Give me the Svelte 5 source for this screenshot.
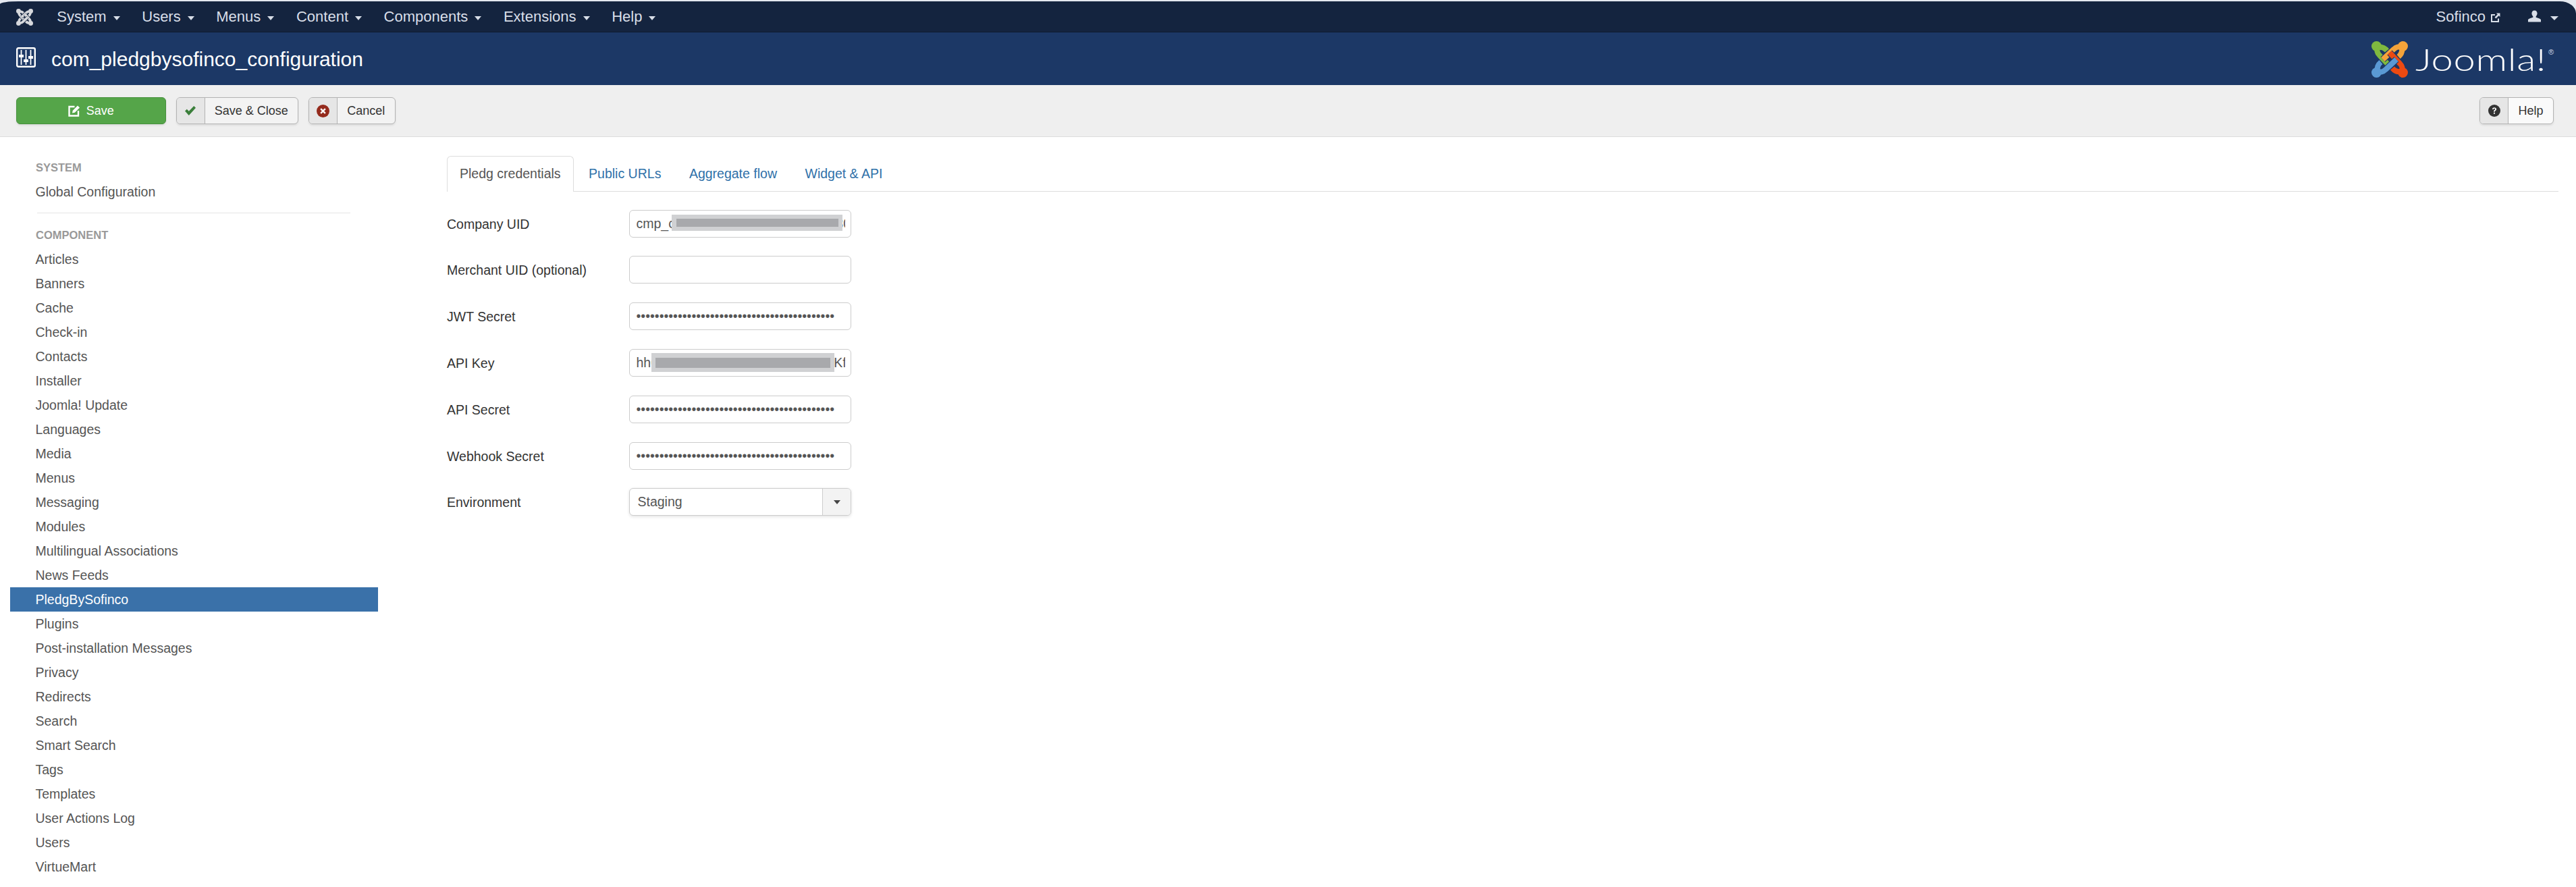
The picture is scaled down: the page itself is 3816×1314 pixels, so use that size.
<script>
	const topMenu = ['System', 'Users', 'Menus', 'Content', 'Components', 'Extensions', 'Help'];
	const components = [
		'Articles', 'Banners', 'Cache', 'Check-in', 'Contacts', 'Installer', 'Joomla! Update',
		'Languages', 'Media', 'Menus', 'Messaging', 'Modules', 'Multilingual Associations',
		'News Feeds', 'PledgBySofinco', 'Plugins', 'Post-installation Messages', 'Privacy',
		'Redirects', 'Search', 'Smart Search', 'Tags', 'Templates', 'User Actions Log', 'Users',
		'VirtueMart'
	];
	const tabs = ['Pledg credentials', 'Public URLs', 'Aggregate flow', 'Widget & API'];
	const secret = 'x'.repeat(43);
	const markColors = ['#7fb93f', '#f4a33a', '#ec4a12', '#5a99d4'];
	const greyColors = ['#d6d8dc', '#d6d8dc', '#d6d8dc', '#d6d8dc'];
</script>

{#snippet mark(colors, gap)}
	<svg class="piece-set" viewBox="0 0 54 54" aria-hidden="true">
		{#each [0, 1, 2, 3] as i}
			<g transform="rotate({i * 90} 27 27)">
				<path d="M23 14 C19 9 14 8 9 9 C8 14 8 17 12 21 L27 37" fill="none" stroke={gap} stroke-width="10" />
				<path d="M23 14 C19 9 14 8 9 9 C8 14 8 17 12 21 L27 37" fill="none" stroke={colors[i]} stroke-width="8" />
				<circle cx="7.500" cy="7.500" r="7.500" fill={colors[i]} />
			</g>
		{/each}
	</svg>
{/snippet}

<div class="page">
	<nav class="topbar">
		<span class="brand">{@render mark(greyColors, '#14243f')}</span>
		<ul class="menu">
			{#each topMenu as item}
				<li>{item}<i class="caret"></i></li>
			{/each}
		</ul>
		<div class="user">
			<span class="site">Sofinco
				<svg class="ext" viewBox="0 0 16 16" aria-hidden="true">
					<path d="M12 9.500V14H2V4h5" fill="none" stroke="currentColor" stroke-width="2" />
					<path d="M9 1.500h5.500V7L12.600 5.200 8.400 9.400 6.600 7.600l4.200-4.200z" fill="currentColor" />
				</svg>
			</span>
			<svg class="person" viewBox="0 0 20 18" aria-hidden="true">
				<path d="M10 0c2.800 0 4.300 2 4.300 4.600 0 2-.9 3.600-2 4.600v1.600c2 .8 6.700 1.600 7.700 3.600V18H0v-3.600c1-2 5.700-2.800 7.700-3.600V9.200c-1.100-1-2-2.600-2-4.600C5.700 2 7.200 0 10 0z" fill="currentColor" />
			</svg>
			<i class="caret wide"></i>
		</div>
	</nav>

	<header class="title-bar">
		<svg class="title-icon" viewBox="0 0 29 30" aria-hidden="true">
			<rect x="1.200" y="1.200" width="26.600" height="27.600" rx="2" fill="none" stroke="#fff" stroke-width="2.400" />
			<path d="M7.500 4v22M14.500 4v22M21.500 4v22" stroke="#fff" stroke-width="1.800" />
			<rect x="4" y="11" width="7" height="4" fill="#fff" />
			<rect x="11" y="18" width="7" height="4" fill="#fff" />
			<rect x="18" y="13" width="7" height="4" fill="#fff" />
		</svg>
		<h1>com_pledgbysofinco_configuration</h1>
		<div class="logo">
			<span class="logo-mark">{@render mark(markColors, '#1c3866')}</span>
			<span class="wordmark">Joomla!</span><span class="reg">®</span>
		</div>
	</header>

	<div class="toolbar">
		<button class="btn save">
			<svg class="ico-save" viewBox="0 0 18 18" aria-hidden="true">
				<path d="M9.500 3H1.500v13.500H15V9" fill="none" stroke="#fff" stroke-width="2.400" />
				<path d="M6 12.500l.8-3.800L14 1.500l3 3-7.200 7.200z" fill="#fff" />
			</svg>
			Save
		</button>
		<button class="btn split close">
			<span class="icon-cell">
				<svg viewBox="0 0 18 16" width="18" height="16" aria-hidden="true">
					<path d="M1 8.500l2.800-2.800 3 3L14.200 1 17 3.800 6.800 15z" fill="#3b7f3b" />
				</svg>
			</span>
			<span class="label">Save &amp; Close</span>
		</button>
		<button class="btn split cancel">
			<span class="icon-cell">
				<svg viewBox="0 0 18 18" width="19" height="19" aria-hidden="true">
					<circle cx="9" cy="9" r="9" fill="#942a1c" />
					<path d="M5.800 5.800l6.400 6.400M12.200 5.800l-6.400 6.400" stroke="#fff" stroke-width="2.200" />
				</svg>
			</span>
			<span class="label">Cancel</span>
		</button>
		<button class="btn split help">
			<span class="icon-cell">
				<svg viewBox="0 0 18 18" width="18" height="18" aria-hidden="true">
					<circle cx="9" cy="9" r="9" fill="#333" />
					<path d="M6 7c0-1.800 1.300-2.800 3-2.800S12.100 5.200 12.100 6.800c0 2-2.300 2-2.300 3.800H8c0-2.600 2.200-2.700 2.200-3.800 0-.6-.5-1-1.200-1s-1.200.4-1.200 1.200z" fill="#fff" />
					<rect x="8" y="11.700" width="1.900" height="2" fill="#fff" />
				</svg>
			</span>
			<span class="label">Help</span>
		</button>
	</div>

	<main class="body">
		<aside class="sidebar">
			<div class="section">System</div>
			<div class="row">Global Configuration</div>
			<hr />
			<div class="section">Component</div>
			{#each components as name}
				<div class="row" class:active={name === 'PledgBySofinco'}>{name}</div>
			{/each}
		</aside>

		<section class="content">
			<ul class="tabs">
				{#each tabs as tab, i}
					<li class:current={i === 0}>{tab}</li>
				{/each}
			</ul>

			<form class="form">
				<div class="field">
					<label for="company">Company UID</label>
					<div class="masked">
						<input id="company" type="text" readonly value="cmp_c0000000000000000000000300000" />
						<span class="blur company"><span></span></span>
					</div>
				</div>
				<div class="field">
					<label for="merchant">Merchant UID (optional)</label>
					<input id="merchant" type="text" readonly value="" />
				</div>
				<div class="field">
					<label for="jwt">JWT Secret</label>
					<input id="jwt" type="password" readonly value={secret} />
				</div>
				<div class="field">
					<label for="apikey">API Key</label>
					<div class="masked">
						<input id="apikey" type="text" readonly value="hh0000000000000000000000000Kfxxxx" />
						<span class="blur key"><span></span></span>
					</div>
				</div>
				<div class="field">
					<label for="apisecret">API Secret</label>
					<input id="apisecret" type="password" readonly value={secret} />
				</div>
				<div class="field">
					<label for="webhook">Webhook Secret</label>
					<input id="webhook" type="password" readonly value={secret} />
				</div>
				<div class="field">
					<label for="env">Environment</label>
					<div id="env" class="chosen">
						<span class="chosen-value">Staging</span>
						<span class="chosen-arrow"><i></i></span>
					</div>
				</div>
			</form>
		</section>
	</main>
</div>

<style>
	:global(body) {
		margin: 0;
		background: #fff;
	}
	.page {
		width: 3816px;
		height: 1314px;
		overflow: hidden;
		font-family: 'Liberation Sans', Arial, sans-serif;
		font-size: 19.5px;
		color: #333;
		background: #fff;
	}

	/* top nav */
	.topbar {
		display: flex;
		align-items: center;
		height: 48px;
		box-sizing: border-box;
		border-top: 2px solid #e4e8ef;
		background: #e4e8ef;
		color: #d8dee8;
		font-size: 22px;
		position: relative;
	}
	.topbar::before {
		content: '';
		position: absolute;
		inset: 0;
		background: #14243f;
		border-bottom: 1px solid #0e1a30;
		border-radius: 28px 24px 0 0 / 4px 18px 0 0;
	}
	.brand,
	.menu,
	.user {
		position: relative;
	}
	.brand {
		width: 27px;
		height: 25px;
		margin-left: 23px;
		display: flex;
	}
	.piece-set {
		width: 100%;
		height: 100%;
		display: block;
	}
	.menu {
		display: flex;
		list-style: none;
		margin: 0 0 0 18px;
		padding: 0;
	}
	.menu li {
		display: flex;
		align-items: center;
		padding: 0 16.3px;
	}
	.caret {
		display: inline-block;
		width: 0;
		height: 0;
		margin-left: 10px;
		margin-top: 3px;
		border-left: 5.5px solid transparent;
		border-right: 5.5px solid transparent;
		border-top: 6px solid currentColor;
	}
	.user {
		display: flex;
		align-items: center;
		margin-left: auto;
		padding-right: 26px;
	}
	.site {
		display: flex;
		align-items: center;
		gap: 7px;
	}
	.ext {
		width: 16px;
		height: 16px;
		margin-top: 2px;
	}
	.person {
		width: 19px;
		height: 18px;
		margin-left: 40px;
		margin-top: -2px;
	}
	.caret.wide {
		margin-left: 14px;
		border-left-width: 6px;
		border-right-width: 6px;
	}

	/* title bar */
	.title-bar {
		display: flex;
		align-items: center;
		height: 78px;
		background: #1c3866;
		padding-left: 24px;
		padding-right: 33px;
		color: #fff;
	}
	.title-icon {
		width: 29px;
		height: 30px;
		margin-top: -4px;
	}
	h1 {
		margin: 0 0 0 23px;
		font-size: 30px;
		font-weight: 400;
		line-height: 36px;
		padding-top: 1px;
	}
	.logo {
		margin-left: auto;
		display: flex;
		align-items: flex-start;
		margin-top: 2px;
	}
	.logo-mark {
		width: 54px;
		height: 54px;
		display: block;
	}
	.wordmark {
		display: block;
		width: 196px;
		font-family: Lato, sans-serif;
		font-weight: 300;
		font-size: 46px;
		line-height: 54px;
		margin-left: 11px;
		letter-spacing: 0.5px;
		white-space: nowrap;
		transform: scaleX(1.26);
		transform-origin: left center;
	}
	.reg {
		font-size: 11px;
		line-height: 14px;
		margin: 9px 0 0 1px;
		color: #d5dbe6;
	}

	/* toolbar */
	.toolbar {
		display: flex;
		align-items: center;
		gap: 15px;
		height: 77px;
		box-sizing: border-box;
		background: #efefef;
		border-bottom: 1.5px solid #ddd;
		padding: 0 33px 0 24px;
	}
	.btn {
		display: flex;
		align-items: center;
		height: 40px;
		padding: 0;
		box-sizing: border-box;
		border: 1.5px solid #b3b3b3;
		border-radius: 6px;
		background: #f3f3f3;
		color: #333;
		font: inherit;
		font-size: 18px;
		box-shadow: 0 1.5px 3px rgba(0, 0, 0, 0.08);
	}
	.save {
		width: 221.5px;
		justify-content: center;
		gap: 9px;
		background: #55a549;
		border-color: #47913d;
		color: #fff;
	}
	.ico-save {
		width: 18px;
		height: 18px;
	}
	.icon-cell {
		display: flex;
		align-items: center;
		justify-content: center;
		height: 100%;
		width: 41px;
		background: #e6e6e6;
		border-right: 1.5px solid #b3b3b3;
		border-radius: 5px 0 0 5px;
	}
	.label {
		flex: 1;
		text-align: center;
	}
	.close {
		width: 181.5px;
	}
	.cancel {
		width: 128.5px;
	}
	.help {
		width: 110px;
		margin-left: auto;
		background: #fafafa;
	}

	/* main area */
	.body {
		display: flex;
		align-items: flex-start;
	}
	.sidebar {
		width: 545px;
		margin-left: 15px;
		padding-top: 27px;
		flex: none;
	}
	.section {
		height: 36px;
		line-height: 36px;
		padding-left: 38px;
		font-size: 16.5px;
		font-weight: 700;
		color: #999;
		text-transform: uppercase;
	}
	.row {
		height: 36px;
		line-height: 37px;
		padding-left: 37.5px;
		color: #555;
	}
	.row.active {
		background: #3a71a9;
		color: #fff;
	}
	hr {
		margin: 12.5px 41px 14px 40px;
		border: 0;
		border-top: 1.5px solid #e5e5e5;
	}
	.content {
		width: 3128px;
		margin-left: 102px;
		padding-top: 28px;
		flex: none;
	}
	.tabs {
		display: flex;
		gap: 3.5px;
		list-style: none;
		margin: 0;
		padding: 0;
		height: 51.5px;
		border-bottom: 1.5px solid #ddd;
	}
	.tabs li {
		box-sizing: border-box;
		height: 53px;
		padding: 0 18px;
		line-height: 51px;
		color: #2f71a9;
		border: 1.5px solid transparent;
		border-bottom: 0;
		border-radius: 6px 6px 0 0;
	}
	.tabs li.current {
		color: #555;
		background: #fff;
		border-color: #ddd;
	}
	.form {
		display: flex;
		flex-direction: column;
		gap: 27.83px;
		margin-top: 27px;
	}
	.field {
		display: flex;
		align-items: center;
	}
	label {
		width: 270px;
		flex: none;
		color: #333;
		padding-top: 2px;
	}
	input {
		width: 328.5px;
		height: 41px;
		box-sizing: border-box;
		padding: 0 7.5px 0 9.5px;
		border: 1.5px solid #ccc;
		border-radius: 6px;
		background: #fff;
		color: #555;
		font: inherit;
		outline: none;
		display: block;
	}
	.masked {
		position: relative;
		width: 328.5px;
	}
	.blur {
		position: absolute;
		display: block;
		background: #d0d1d3;
	}
	.blur span {
		position: absolute;
		display: block;
		background: #a8a9ac;
	}
	.blur.company {
		left: 63px;
		top: 7px;
		width: 253px;
		height: 24px;
	}
	.blur.company span {
		left: 6.500px;
		right: 6px;
		top: 6px;
		height: 12px;
	}
	.blur.key {
		left: 33px;
		top: 6px;
		width: 271px;
		height: 28px;
	}
	.blur.key span {
		left: 6px;
		right: 6px;
		top: 7px;
		height: 15px;
	}
	.chosen {
		display: flex;
		width: 329px;
		height: 41px;
		box-sizing: border-box;
		border: 1.5px solid #ccc;
		border-radius: 6px;
		background: #fff;
		color: #555;
		box-shadow: 0 1.5px 4px rgba(0, 0, 0, 0.1);
		overflow: hidden;
	}
	.chosen-value {
		flex: 1;
		padding-left: 11.5px;
		line-height: 38px;
	}
	.chosen-arrow {
		width: 41px;
		display: flex;
		align-items: center;
		justify-content: center;
		background: #f3f3f3;
		border-left: 1.5px solid #ccc;
	}
	.chosen-arrow i {
		width: 0;
		height: 0;
		border-left: 5.5px solid transparent;
		border-right: 5.5px solid transparent;
		border-top: 6px solid #444;
	}
</style>
